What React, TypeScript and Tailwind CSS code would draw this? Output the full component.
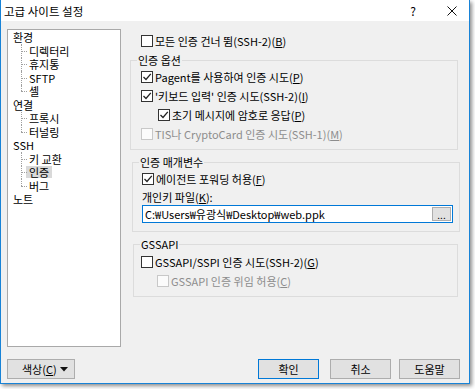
import { ReactNode } from 'react';

const Check = ({ checked, disabled }: { checked?: boolean; disabled?: boolean }) => (
  <span
    className={`flex h-[12px] w-[12px] shrink-0 items-center justify-center border ${
      disabled ? 'border-[#c8c8c8] bg-[#fbfbfb]' : 'border-[#333333] bg-white'
    }`}
  >
    {checked && (
      <svg width="10" height="10" viewBox="0 0 10 10">
        <path d="M1.5 5 L4 7.5 L8.8 1.8" fill="none" stroke="#222" strokeWidth="1.3" />
      </svg>
    )}
  </span>
);

const CheckRow = ({
  children,
  checked,
  disabled,
  className = '',
}: {
  children: ReactNode;
  checked?: boolean;
  disabled?: boolean;
  className?: string;
}) => (
  <div className={`flex h-[14px] items-center gap-[2px] ${className}`}>
    <Check checked={checked} disabled={disabled} />
    <span className={`whitespace-nowrap leading-[14px] ${disabled ? 'text-[#8d8d8d]' : 'text-black'}`}>{children}</span>
  </div>
);

const Group = ({ title, className = '', children }: { title: string; className?: string; children: ReactNode }) => (
  <div className={`border border-[#dcdcdc] ${className}`}>
    <div className="-mt-[8px] ml-[6px] h-[14px] w-fit bg-[#f0f0f0] px-[1px] leading-[14px]">{title}</div>
    {children}
  </div>
);

const TreeTop = ({ children }: { children: ReactNode }) => (
  <div className="flex h-[13.5px] items-center leading-[12px]">{children}</div>
);

const TreeChild = ({ children, last, selected }: { children: ReactNode; last?: boolean; selected?: boolean }) => (
  <div className="flex h-[13.5px] items-center leading-[12px]">
    <div className="relative w-[16px] self-stretch">
      <div
        className={`absolute left-[8px] top-0 border-l border-dotted border-[#a0a0a0] ${last ? 'h-1/2' : 'h-full'}`}
      />
      <div className="absolute left-[8px] top-1/2 w-[6px] border-t border-dotted border-[#a0a0a0]" />
    </div>
    <span className={selected ? '-ml-[3px] bg-[#d9d9d9] px-[3px]' : ''}>{children}</span>
  </div>
);

const Btn = ({ children, primary, className = '' }: { children: ReactNode; primary?: boolean; className?: string }) => (
  <div
    className={`flex h-[20px] w-[61px] items-center justify-center border bg-[#e1e1e1] ${
      primary ? 'border-[#0078d7]' : 'border-[#adadad]'
    } ${className}`}
  >
    {children}
  </div>
);

export default function App() {
  return (
    <div className="h-[389px] w-[475px] bg-white font-['Noto_Sans_CJK_KR',sans-serif] text-[11px] text-black">
      <div className="flex h-[384px] w-[470px] flex-col border-x border-b border-[#1883d7] bg-[#f0f0f0] shadow-[2px_2px_4px_rgba(0,0,0,0.45)]">
        {/* title bar */}
        <div className="flex h-[21px] shrink-0 items-center bg-white">
          <span className="pl-[3px] text-[11.5px] leading-[14px]">고급 사이트 설정</span>
          <span className="ml-auto w-[10px] text-center text-[12px] leading-[14px]">?</span>
          <svg className="ml-[29px] mr-[12px]" width="10" height="10" viewBox="0 0 10 10">
            <path d="M0.5 0.5 L9.5 9.5 M9.5 0.5 L0.5 9.5" stroke="#111" strokeWidth="1" />
          </svg>
        </div>

        <div className="flex">
          {/* tree */}
          <div className="ml-[6px] mt-[8px] h-[318px] w-[114px] border border-[#a9a9a9] bg-white pl-[5px] pt-[0.5px]">
            <TreeTop>환경</TreeTop>
            <TreeChild>디렉터리</TreeChild>
            <TreeChild>휴지통</TreeChild>
            <TreeChild>SFTP</TreeChild>
            <TreeChild last>셸</TreeChild>
            <TreeTop>연결</TreeTop>
            <TreeChild>프록시</TreeChild>
            <TreeChild last>터널링</TreeChild>
            <TreeTop>SSH</TreeTop>
            <TreeChild>키 교환</TreeChild>
            <TreeChild selected>인증</TreeChild>
            <TreeChild last>버그</TreeChild>
            <TreeTop>노트</TreeTop>
          </div>

          {/* settings */}
          <div className="ml-[9px] flex w-[331px] flex-col">
            <CheckRow className="ml-[11px] mt-[13px]">
              모든 인증 건너 뜀(SSH-2)(<u>B</u>)
            </CheckRow>

            <Group title="인증 옵션" className="mt-[12px] w-[328px]">
              <div className="mt-[3px] flex flex-col gap-[5px] pb-[8px] pl-[10px]">
                <CheckRow checked>
                  Pagent를 사용하여 인증 시도(<u>P</u>)
                </CheckRow>
                <CheckRow checked>
                  '키보드 입력' 인증 시도(SSH-2)(<u>I</u>)
                </CheckRow>
                <CheckRow checked className="pl-[17px]">
                  초기 메시지에 암호로 응답(<u>P</u>)
                </CheckRow>
                <CheckRow disabled>
                  TIS나 CryptoCard 인증 시도(SSH-1)(<u>M</u>)
                </CheckRow>
              </div>
            </Group>

            <Group title="인증 매개변수" className="ml-[2px] mt-[12px] w-[328px]">
              <div className="mt-[3px] flex flex-col pb-[8px] pl-[9px]">
                <CheckRow checked>
                  에이전트 포워딩 허용(<u>F</u>)
                </CheckRow>
                <div className="mt-[4px] h-[14px] leading-[14px]">
                  개인키 파일(<u>K</u>):
                </div>
                <div className="mt-[1px] flex h-[18px] w-[311px] items-center border border-[#0078d7] bg-white pl-[2px] pr-[1px]">
                  <span className="whitespace-nowrap leading-[14px]">C:₩Users₩유광식₩Desktop₩web.ppk</span>
                  <div className="ml-auto flex h-[14px] w-[19px] items-end justify-center border border-[#adadad] bg-[#e1e1e1] text-[10px] leading-[10px]">
                    ...
                  </div>
                </div>
              </div>
            </Group>

            <Group title="GSSAPI" className="ml-[3px] mt-[12px] w-[325px]">
              <div className="mt-[4px] flex flex-col gap-[5px] pb-[8px] pl-[7px]">
                <CheckRow>
                  GSSAPI/SSPI 인증 시도(SSH-2)(<u>G</u>)
                </CheckRow>
                <CheckRow disabled className="pl-[16px]">
                  GSSAPI 인증 위임 허용(<u>C</u>)
                </CheckRow>
              </div>
            </Group>
          </div>
        </div>

        {/* buttons */}
        <div className="mt-[12px] flex">
          <div className="ml-[6px] flex h-[20px] w-[68px] items-center border border-[#adadad] bg-[#e1e1e1]">
            <span className="ml-[14px] leading-[14px]">
              색상(<u>C</u>)
            </span>
            <svg className="ml-auto mr-[6px]" width="8" height="5" viewBox="0 0 8 5">
              <path d="M0 0 H8 L4 4.5 Z" fill="#111" />
            </svg>
          </div>
          <Btn primary className="ml-auto">
            확인
          </Btn>
          <Btn className="ml-[11px]">취소</Btn>
          <Btn className="ml-[8px] mr-[9px]">도움말</Btn>
        </div>
      </div>
    </div>
  );
}
